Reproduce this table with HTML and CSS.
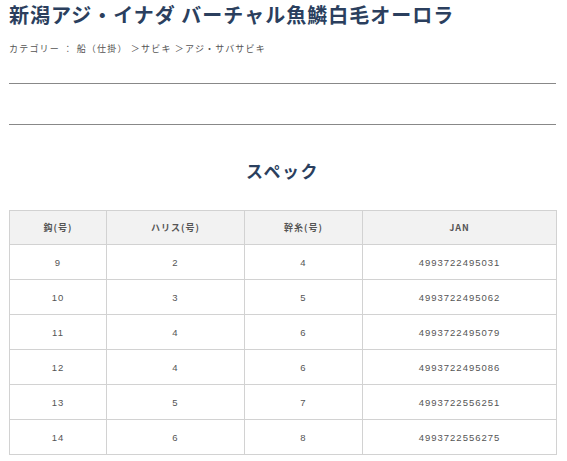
FILE: index.html
```html
<!DOCTYPE html>
<html lang="ja">
<head>
<meta charset="utf-8">
<link rel="stylesheet" href="styles.css">
</head>
<body>
<div class="page">
  <h1 class="title">新潟アジ・イナダ バーチャル魚鱗白毛オーロラ</h1>
  <p class="crumbs">カテゴリー ： 船（仕掛） ＞サビキ ＞アジ・サバサビキ</p>
  <hr class="rule rule-first">
  <hr class="rule rule-second">
  <h2 class="spec-title">スペック</h2>
  <table class="spec">
    <colgroup>
      <col class="c1"><col class="c2"><col class="c3"><col class="c4">
    </colgroup>
    <thead>
      <tr><th>鈎(号)</th><th>ハリス(号)</th><th>幹糸(号)</th><th>JAN</th></tr>
    </thead>
    <tbody>
      <tr><td>9</td><td>2</td><td>4</td><td>4993722495031</td></tr>
      <tr><td>10</td><td>3</td><td>5</td><td>4993722495062</td></tr>
      <tr><td>11</td><td>4</td><td>6</td><td>4993722495079</td></tr>
      <tr><td>12</td><td>4</td><td>6</td><td>4993722495086</td></tr>
      <tr><td>13</td><td>5</td><td>7</td><td>4993722556251</td></tr>
      <tr><td>14</td><td>6</td><td>8</td><td>4993722556275</td></tr>
    </tbody>
  </table>
</div>
</body>
</html>
```

FILE: styles.css
```css
html, body {
  margin: 0;
  padding: 0;
  background: #fff;
}
body {
  font-family: "Liberation Sans", "Noto Sans CJK JP", sans-serif;
  color: #555;
}
.page {
  width: 547px;
  padding: 0 0 0 9px;
}
.title {
  margin: 0;
  font-family: "Noto Sans CJK JP", sans-serif;
  font-size: 20px;
  line-height: 30px;
  font-weight: 700;
  letter-spacing: 1px;
  color: #2b3f5e;
  white-space: nowrap;
}
.crumbs {
  margin: 12px 0 0;
  font-family: "Noto Sans CJK JP", sans-serif;
  font-size: 9px;
  line-height: 14px;
  letter-spacing: 1.2px;
  color: #555;
}
.rule {
  border: 0;
  height: 1px;
  background: #888;
  margin: 0;
}
.rule-first { margin-top: 27px; }
.rule-second { margin-top: 40px; }
.spec-title {
  margin: 34px 0 0;
  text-align: center;
  font-family: "Noto Sans CJK JP", sans-serif;
  font-size: 17px;
  line-height: 24px;
  font-weight: 700;
  letter-spacing: 1.5px;
  color: #2b3f5e;
}
.spec {
  margin-top: 27px;
  width: 547px;
  border-collapse: collapse;
  table-layout: fixed;
}
.c1 { width: 97px; }
.c2 { width: 138px; }
.c3 { width: 118px; }
.c4 { width: 194px; }
.spec th, .spec td {
  border: 1px solid #d2d2d2;
  text-align: center;
  padding: 0;
  color: #555;
  letter-spacing: 1px;
}
.spec th {
  height: 33px;
  background: #f2f2f2;
  font-family: "Noto Sans CJK JP", sans-serif;
  font-size: 9px;
  font-weight: 700;
}
.spec td {
  height: 34px;
  font-size: 9.5px;
  font-family: "Liberation Sans", sans-serif;
}
```
